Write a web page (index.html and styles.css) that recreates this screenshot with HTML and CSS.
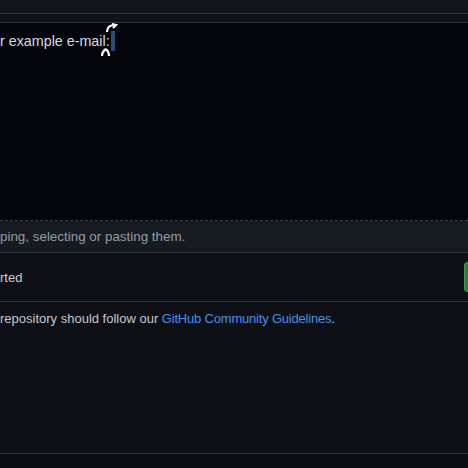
FILE: index.html
```html
<!DOCTYPE html>
<html lang="en">
<head>
<meta charset="utf-8">
<link rel="stylesheet" href="styles.css">
</head>
<body>
<div class="topbar"></div>
<div class="strip"></div>
<div class="editor">
  <div class="line"><span class="txt">r example e-mail:</span><span class="sel"></span>
    <svg class="cursor" width="22" height="34" viewBox="0 0 22 34"><path d="M6 9 C6 4 9 2 14 2 M11 1 L15 2 L12 5" stroke="#fff" stroke-width="2.2" fill="none"/><path d="M5 26 C2 28 1 31 1 33 M5 26 C7 28 8 31 8 33" stroke="#fff" stroke-width="2.2" fill="none"/></svg>
  </div>
</div>
<div class="dropnote">ping, selecting or pasting them.</div>
<div class="actions">
  <span class="muted">rted</span>
  <span class="btn"></span>
</div>
<p class="guide">repository should follow our <a href="#">GitHub Community Guidelines</a>.</p>
<div class="spacer"></div>
<div class="bottom"></div>
</body>
</html>
```
FILE: styles.css
```css
html, body { margin: 0; padding: 0; }
body {
  width: 468px; height: 468px; overflow: hidden;
  background: #0e1016;
  font-family: "Liberation Sans", Arial, sans-serif;
  color: #d1d7e0;
}
.topbar { height: 13px; background: #111419; border-bottom: 1px solid #34383f; }
.strip { height: 8px; background: #0f1217; border-bottom: 1px solid #34383f; }
.editor { box-sizing: border-box; height: 198px; padding-top: 8px; background: #04050a; border-bottom: 1px dashed #3b3f46; }
.line { position: relative; display: flex; align-items: center; height: 20px; font-size: 14.3px; color: #d6dae0; }
.txt { white-space: nowrap; }
.sel { width: 4px; height: 20px; background: #2c4a74; margin-left: 1px; }
.cursor { position: absolute; left: 101px; top: -8px; }
.dropnote { height: 31px; display: flex; align-items: center; background: #161a21; border-bottom: 1px solid #30343b; font-size: 13.4px; color: #979ca5; white-space: nowrap; }
.actions { height: 48px; display: flex; align-items: center; justify-content: space-between; border-bottom: 1px solid #30343b; font-size: 13px; background: #0e1016; }
.muted { color: #c9ced6; }
.btn { width: 3px; height: 28px; background: #2a7d3c; border: 1px solid #3f9a52; border-right: none; border-radius: 5px 0 0 5px; }
.guide { margin: 0; height: 33px; line-height: 33px; font-size: 13px; color: #c3c8cf; white-space: nowrap; }
.guide a { color: #4a8fe8; text-decoration: none; letter-spacing: -0.2px; }
.spacer { height: 118px; }
.bottom { height: 16px; border-top: 1px solid #2f333a; background: #0b0d12; }
```
